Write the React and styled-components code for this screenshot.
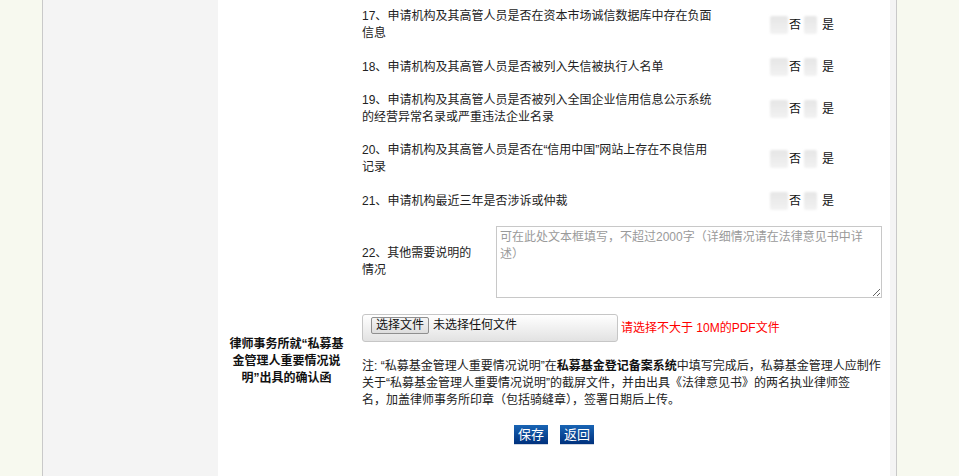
import React from "react";
import styled, { createGlobalStyle } from "styled-components";

const questions = [
  { no: 17, text: "申请机构及其高管人员是否在资本市场诚信数据库中存在负面信息" },
  { no: 18, text: "申请机构及其高管人员是否被列入失信被执行人名单" },
  { no: 19, text: "申请机构及其高管人员是否被列入全国企业信用信息公示系统的经营异常名录或严重违法企业名录" },
  { no: 20, text: "申请机构及其高管人员是否在“信用中国”网站上存在不良信用记录" },
  { no: 21, text: "申请机构最近三年是否涉诉或仲裁" },
];

const App = () => {
  return (
    <>
      <GlobalStyle />
      <Frame>
        <SideColumn />
        <Panel>
          <FormGrid>
            <LabelCell />
            <ContentCell>
              {questions.map((q) => (
                <QuestionRow key={q.no}>
                  <Question>
                    {q.no}、{q.text}
                  </Question>
                  <Choices>
                    <RadioMark $wide />
                    <ChoiceText>否</ChoiceText>
                    <RadioMark />
                    <ChoiceText>是</ChoiceText>
                  </Choices>
                </QuestionRow>
              ))}
              <QuestionRow>
                <SubLabel>22、其他需要说明的情况</SubLabel>
                <TextArea placeholder="可在此处文本框填写，不超过2000字（详细情况请在法律意见书中详述）" />
              </QuestionRow>
            </ContentCell>

            <LabelCell>
              <BoldLabel>律师事务所就“私募基金管理人重要情况说明”出具的确认函</BoldLabel>
            </LabelCell>
            <ContentCell>
              <FileRow>
                <FilePicker>
                  <PickButton>选择文件</PickButton>
                  <FileName>未选择任何文件</FileName>
                </FilePicker>
                <Hint>请选择不大于 10M的PDF文件</Hint>
              </FileRow>
              <Note>
                注: “私募基金管理人重要情况说明”在<strong>私募基金登记备案系统</strong>中填写完成后，私募基金管理人应制作
                <br />
                关于“私募基金管理人重要情况说明”的截屏文件，并由出具《法律意见书》的两名执业律师签
                <br />
                名，加盖律师事务所印章（包括骑缝章），签署日期后上传。
              </Note>
            </ContentCell>

            <Actions>
              <ActionButton>保存</ActionButton>
              <ActionButton>返回</ActionButton>
            </Actions>
          </FormGrid>
        </Panel>
      </Frame>
    </>
  );
};

export default App;

const GlobalStyle = createGlobalStyle`
  html, body {
    margin: 0;
    padding: 0;
    background: #f7f9ef;
  }
  body {
    font-family: "Liberation Sans", "Noto Sans CJK SC", sans-serif;
    font-size: 12px;
    color: #222;
  }
`;

const Frame = styled.div`
  display: flex;
  width: 853px;
  min-height: 100vh;
  margin-left: 42px;
  border-left: 1px solid #c9c9c9;
  border-right: 1px solid #c9c9c9;
  background: #f4f4f4;
`;

const SideColumn = styled.div`
  width: 175px;
  flex-shrink: 0;
`;

const Panel = styled.div`
  width: 672px;
  background: #fff;
`;

const FormGrid = styled.div`
  display: grid;
  grid-template-columns: 137px 1fr;
`;

const LabelCell = styled.div`
  align-self: center;
  padding: 0 10px;
`;

const BoldLabel = styled.div`
  font-weight: bold;
  color: #111;
  line-height: 17px;
  text-align: center;
`;

const ContentCell = styled.div`
  padding-left: 7px;
`;

const QuestionRow = styled.div`
  display: flex;
  align-items: center;
  padding: 8px 0;
`;

const Question = styled.div`
  width: 353px;
  line-height: 17px;
`;

const Choices = styled.div`
  display: flex;
  align-items: center;
  margin-left: 55px;
`;

const RadioMark = styled.span`
  display: inline-block;
  width: ${(p) => (p.$wide ? "18px" : "13px")};
  height: 18px;
  margin-right: ${(p) => (p.$wide ? "1px" : "5px")};
  background: linear-gradient(#e6e6e6, #f2f2f2);
  border-radius: 2px;
  filter: blur(0.8px);
`;

const ChoiceText = styled.span`
  line-height: 17px;
  margin-right: 3px;
  color: #111;
`;

const SubLabel = styled.div`
  width: 115px;
  margin-right: 19px;
  line-height: 17px;
`;

const TextArea = styled.textarea`
  box-sizing: border-box;
  width: 386px;
  height: 72px;
  margin: 0;
  padding: 2px 14px 2px 3px;
  border: 1px solid #c8c8c8;
  font-family: "Liberation Sans", "Noto Sans CJK SC", sans-serif;
  font-size: 12px;
  line-height: 17px;
  color: #333;
  resize: both;

  &::placeholder {
    color: #9a9a9a;
  }
`;

const FileRow = styled.div`
  display: flex;
  align-items: center;
  padding: 8px 0;
`;

const FilePicker = styled.div`
  box-sizing: border-box;
  display: flex;
  align-items: flex-start;
  width: 256px;
  height: 28px;
  padding: 2px 8px;
  border: 1px solid #c6c6c6;
  border-radius: 3px;
  background: linear-gradient(#ffffff, #e2e2e2);
`;

const PickButton = styled.span`
  box-sizing: border-box;
  height: 17px;
  padding: 0 4px;
  border: 1px solid #8f8f8f;
  border-radius: 2px;
  background: linear-gradient(#f5f5f5, #dddddd);
  line-height: 15px;
  color: #111;
`;

const FileName = styled.span`
  margin-left: 4px;
  line-height: 17px;
  color: #111;
`;

const Hint = styled.span`
  margin-left: 3px;
  color: #ff0000;
  line-height: 17px;
`;

const Note = styled.div`
  padding: 8px 0;
  line-height: 17px;

  strong {
    color: #111;
  }
`;

const Actions = styled.div`
  grid-column: 1 / -1;
  display: flex;
  justify-content: center;
  gap: 12px;
  padding: 8px 0;
`;

const ActionButton = styled.button`
  width: 34px;
  height: 19px;
  padding: 0;
  border: none;
  background: linear-gradient(#1864b4, #00317d);
  box-shadow: 0 1px 0 #cfd6e0;
  color: #fff;
  font-family: "Liberation Sans", "Noto Sans CJK SC", sans-serif;
  font-size: 13px;
  line-height: 19px;
  cursor: pointer;
`;
